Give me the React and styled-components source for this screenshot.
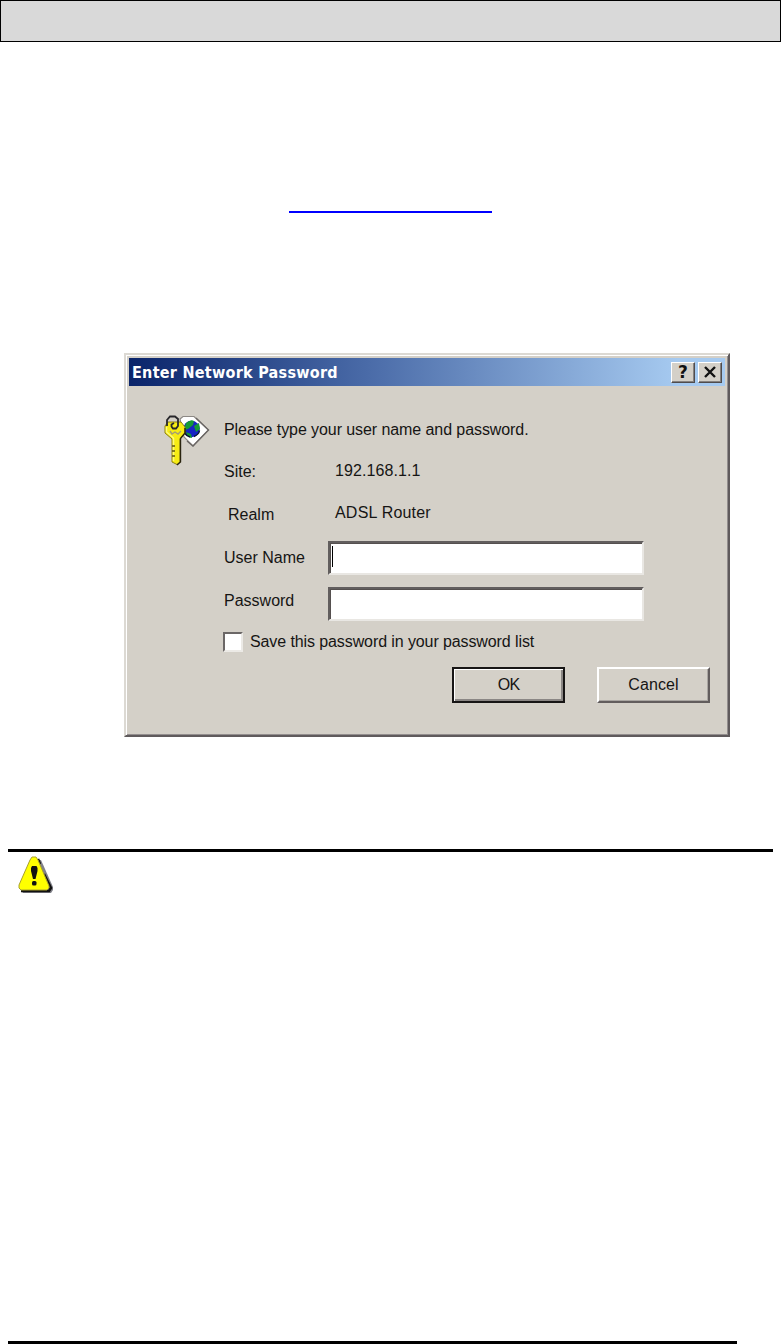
import React, { useState } from 'react';
import styled, { createGlobalStyle } from 'styled-components';

function KeyIcon() {
  return (
    <svg width="48" height="52" viewBox="0 0 48 52">
      <path d="M17 4 L20 1.5 H31 L45.5 15 L30 31 L21 22 Z" fill="#fff" stroke="#8d8985" strokeWidth="1.2" />
      <path d="M33 3 L45.5 15 L30 31 L24 26" fill="none" stroke="#6a6664" strokeWidth="1.3" />
      <circle cx="28.5" cy="14" r="8.3" fill="#1624c4" />
      <path d="M23 8 q5 -4 8 -2 l-1 4 l-5 4 l-4 1 z M31 11 l5 -3 l1 6 l-4 3 z M23 17 l5 2 l1 4 q-4 0 -6 -6 z" fill="#159a35" />
      <path d="M21 12 q-1 8 6 10 M31 21.5 q5 -2 5.5 -6" fill="none" stroke="#0b1730" strokeWidth="1.4" />
      <path d="M5 7 H18 L22 12 V18 L17 24 V47 L14 49.5 L9 47 V24 L2 18 V11 Z" fill="#f6ec14" stroke="#8a7e14" strokeWidth="1" />
      <path d="M3.5 12 V17 L10.5 23 V46" fill="none" stroke="#fffb7a" strokeWidth="1.5" />
      <path d="M22 13 V18 L17.5 23.5 V47 L14 50" fill="none" stroke="#29240f" strokeWidth="1.4" />
      <path d="M9 31 h3 M9 36 h3 M9 41 h3" stroke="#5d5514" strokeWidth="1.6" />
      <path d="M4 11 V5 L7 1.5 H12 L15 4 V11 L13 13.5 H10 L8.5 11.5 V9.5 L11 8" fill="none" stroke="#28272b" strokeWidth="1.8" />
      <path d="M7 16 l2 3 l3 -2 l3 2 l3 -3" fill="none" stroke="#a49d78" strokeWidth="1.4" />
    </svg>
  );
}

function WarningIcon() {
  return (
    <svg width="36" height="38" viewBox="0 0 36 38">
      <path d="M19 4 H23 L35 31 V34 L33 37 H5 L3 34 Z" fill="#808088" />
      <path d="M20 3 L22 8 M26 18 L33 32 L31 35 H3" fill="none" stroke="#111" strokeWidth="2.5" />
      <path d="M14 1 H18 L20 4 L31 30 V32 L29 34 H3 L1 32 V29 L12 4 Z" fill="#ff0" stroke="#a8a02c" strokeWidth="1" />
      <path d="M13 12 L14 10 H18.5 L19.5 12 V15 L17.5 23 H15 L13 15 Z" fill="#111" />
      <rect x="14" y="25" width="4.5" height="4.5" rx="1.5" fill="#111" />
    </svg>
  );
}

function App() {
  const [userName, setUserName] = useState('');
  const [password, setPassword] = useState('');
  const [save, setSave] = useState(false);

  return (
    <Page>
      <GlobalStyle />
      <PageHeader />
      <LinkLine />
      <Dialog>
        <TitleBar>
          <Title>Enter Network Password</Title>
          <TitleButton aria-label="Help">?</TitleButton>
          <TitleButton aria-label="Close">
            <svg width="14" height="12" viewBox="0 0 14 12">
              <path d="M2 1 L12 11 M12 1 L2 11" stroke="#111" strokeWidth="2.4" />
            </svg>
          </TitleButton>
        </TitleBar>
        <DialogBody>
          <IconCell><KeyIcon /></IconCell>
          <Form>
            <Row $height={43}>
              <Text $spacing={-0.08}>Please type your user name and password.</Text>
            </Row>
            <Row $height={42}>
              <Label>Site:</Label>
              <Value $spacing={0.1}>192.168.1.1</Value>
            </Row>
            <Row $height={43}>
              <Label $indent={4}>Realm</Label>
              <Value $spacing={0.2}>ADSL Router</Value>
            </Row>
            <Row $height={43}>
              <Label>User Name</Label>
              <Field>
                <Caret />
                <Input value={userName} onChange={(e) => setUserName(e.target.value)} />
              </Field>
            </Row>
            <Row $height={49}>
              <Label $lift={5}>Password</Label>
              <Field>
                <Input type="password" value={password} onChange={(e) => setPassword(e.target.value)} />
              </Field>
            </Row>
            <CheckRow>
              <CheckBox type="checkbox" checked={save} onChange={() => setSave(!save)} />
              <Text $spacing={-0.1}>Save this password in your password list</Text>
            </CheckRow>
          </Form>
        </DialogBody>
        <Buttons>
          <Button $primary><Text $spacing={-0.8}>OK</Text></Button>
          <Button><Text $spacing={0.1}>Cancel</Text></Button>
        </Buttons>
      </Dialog>
      <Note>
        <WarningIcon />
      </Note>
      <BottomRule />
    </Page>
  );
}

export default App;

const GlobalStyle = createGlobalStyle`
  body {
    margin: 0;
    background: #fff;
  }

  * {
    box-sizing: border-box;
  }
`;

const Page = styled.div`
  display: flex;
  flex-direction: column;
  width: 781px;
  height: 1344px;
  font-family: "Liberation Sans", Arial, sans-serif;
  color: #161514;
`;

const PageHeader = styled.header`
  height: 42px;
  background: #d9d9d9;
  border: 1px solid #000;
`;

const LinkLine = styled.div`
  width: 203px;
  height: 2px;
  margin: 169px 0 0 289px;
  background: #00f;
`;

const Dialog = styled.section`
  display: flex;
  flex-direction: column;
  width: 606px;
  height: 384px;
  margin: 140px 0 0 124px;
  padding: 3px;
  background: #d4d0c8;
  border: 2px solid;
  border-color: #dcd9d3 #5f5a5c #5f5a5c #dcd9d3;
  box-shadow: inset 1px 1px #fff, inset -1px -1px #938e8e;
`;

const TitleBar = styled.div`
  display: flex;
  flex: none;
  align-items: center;
  height: 28px;
  padding: 0 3px;
  background: linear-gradient(to right, #0a246a, #4a6ba8 40%, #a6caf0 92%);
`;

const Title = styled.span`
  flex: 1;
  color: #fff;
  font-family: "DejaVu Sans Condensed", "DejaVu Sans", sans-serif;
  font-size: 16px;
  font-weight: bold;
  letter-spacing: 0.27px;
  white-space: nowrap;
`;

const TitleButton = styled.button`
  display: flex;
  align-items: center;
  justify-content: center;
  width: 24px;
  height: 21px;
  margin-left: 3px;
  padding: 0;
  background: #d4d0c8;
  border: 1px solid;
  border-color: #fff #504c4c #504c4c #fff;
  box-shadow: inset -1px -1px #85817f;
  font: bold 17px "DejaVu Sans", sans-serif;
  color: #111;
`;

const DialogBody = styled.div`
  display: flex;
  height: 281px;
  padding: 22px 0 0 34px;
`;

const IconCell = styled.div`
  width: 61px;
  padding-top: 7px;
`;

const Form = styled.div`
  display: flex;
  flex-direction: column;
`;

const Row = styled.div`
  display: flex;
  align-items: center;
  height: ${(props) => props.$height}px;
`;

const Text = styled.span`
  font-size: 16px;
  letter-spacing: ${(props) => props.$spacing || 0}px;
  white-space: nowrap;
`;

const Label = styled(Text)`
  width: 104px;
  padding-left: ${(props) => props.$indent || 0}px;
  padding-bottom: ${(props) => props.$lift || 0}px;
`;

const Value = styled(Text)`
  padding: 0 0 3px 7px;
`;

const Field = styled.div`
  display: flex;
  width: 316px;
  height: 34px;
  padding: 1px 2px;
  background: #fff;
  border: 2px solid;
  border-color: #625e5e #e9e7e3 #e9e7e3 #625e5e;
  box-shadow: inset 1px 1px #55504f;
`;

const Caret = styled.span`
  width: 1px;
  height: 21px;
  margin-top: 2px;
  background: #000;
`;

const Input = styled.input`
  flex: 1;
  min-width: 0;
  padding: 0 3px;
  border: 0;
  outline: 0;
  background: transparent;
  font: 16px "Liberation Sans", Arial, sans-serif;
`;

const CheckRow = styled.label`
  display: flex;
  align-items: center;
  height: 27px;
`;

const CheckBox = styled.input`
  appearance: none;
  width: 20px;
  height: 20px;
  margin: 0 7px 0 -1px;
  background: #fff;
  border: 2px solid;
  border-color: #6b6766 #eceae6 #eceae6 #6b6766;
`;

const Buttons = styled.div`
  display: flex;
  gap: 32px;
  padding-left: 323px;
`;

const Button = styled.button`
  width: 113px;
  height: 36px;
  padding: 0;
  background: #d4d0c8;
  border: ${(props) => (props.$primary ? '2px solid #171515' : '2px solid')};
  ${(props) => !props.$primary && 'border-color: #fff #625d5d #625d5d #fff;'}
  box-shadow: ${(props) => (props.$primary ? 'inset 1px 1px #fff, inset -2px -2px #8b8785' : 'inset -1px -1px #aaa6a2')};
  font-family: inherit;
  color: #161514;
`;

const Note = styled.section`
  display: flex;
  width: 765px;
  margin: 112px 0 0 8px;
  padding: 4px 0 0 10px;
  border-top: 3px solid #000;
`;

const BottomRule = styled.div`
  width: 729px;
  height: 3px;
  margin: auto 0 0 8px;
  background: #000;
`;
